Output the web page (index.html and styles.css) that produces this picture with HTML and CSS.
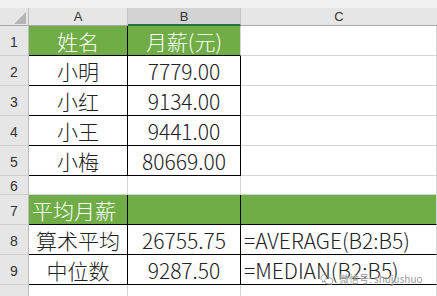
FILE: index.html
```html
<!DOCTYPE html>
<html lang="zh">
<head>
<meta charset="utf-8">
<link rel="stylesheet" href="styles.css">
</head>
<body>
<div class="sheet">
  <div class="strip"></div>

  <div class="corner"><span class="tri"></span></div>
  <div class="colhead">A</div>
  <div class="colhead sel">B</div>
  <div class="colhead last">C</div>

  <div class="rowhead">1</div>
  <div class="cell green bk-r bk-b center">姓名</div>
  <div class="cell green bk-b center">月薪(元)</div>
  <div class="cell"></div>

  <div class="rowhead">2</div>
  <div class="cell bk-r bk-b center">小明</div>
  <div class="cell bk-r bk-b center">7779.00</div>
  <div class="cell"></div>

  <div class="rowhead">3</div>
  <div class="cell bk-r bk-b center">小红</div>
  <div class="cell bk-r bk-b center">9134.00</div>
  <div class="cell"></div>

  <div class="rowhead">4</div>
  <div class="cell bk-r bk-b center">小王</div>
  <div class="cell bk-r bk-b center">9441.00</div>
  <div class="cell"></div>

  <div class="rowhead">5</div>
  <div class="cell bk-r bk-b center">小梅</div>
  <div class="cell bk-r bk-b center">80669.00</div>
  <div class="cell"></div>

  <div class="rowhead short">6</div>
  <div class="cell"></div>
  <div class="cell"></div>
  <div class="cell"></div>

  <div class="rowhead">7</div>
  <div class="cell green bk-r bk-b">平均月薪</div>
  <div class="cell green bk-r bk-b"></div>
  <div class="cell green bk-b"></div>

  <div class="rowhead">8</div>
  <div class="cell bk-r bk-b center">算术平均</div>
  <div class="cell bk-r bk-b center">26755.75</div>
  <div class="cell bk-b">=AVERAGE(B2:B5)</div>

  <div class="rowhead">9</div>
  <div class="cell bk-r bk-b center">中位数</div>
  <div class="cell bk-r bk-b center">9287.50</div>
  <div class="cell bk-b">=MEDIAN(B2:B5)</div>

  <div class="rowhead">10</div>
  <div class="cell"></div>
  <div class="cell"></div>
  <div class="cell"></div>

  <div class="watermark">
    <svg class="wm-icon" width="14" height="12" viewBox="0 0 15 12" fill="none" stroke="#9a9a9a" stroke-width="1">
      <path d="M6 1C3.2 1 1 2.8 1 5c0 1.2.7 2.3 1.8 3l-.4 1.5 1.7-.9c.6.2 1.2.3 1.9.3"/>
      <path d="M9.5 4.5c-2.6 0-4.6 1.6-4.6 3.5s2 3.5 4.6 3.5c.5 0 1-.1 1.5-.2l1.4.8-.3-1.3c1-.6 1.6-1.6 1.6-2.8 0-1.900-2-3.5-4.200-3.5z"/>
    </svg>
    <span class="wm-text">微信号: shujushuo</span>
  </div>
</div>
</body>
</html>
```

FILE: styles.css
```css
html, body {
  margin: 0;
  padding: 0;
  background: #ffffff;
}

.sheet {
  position: relative;
  width: 437px;
  height: 296px;
  overflow: hidden;
  display: grid;
  grid-template-columns: 29px 99px 113px 1fr;
  grid-template-rows: 8px 18px 30px 30px 30px 30px 30px 19px 30px 30px 30px 30px;
  font-family: "Noto Sans CJK SC", "Noto Sans", sans-serif;
  font-weight: 300;
  color: #222;
}

.strip {
  grid-column: 1 / -1;
  background: #f1f1f1;
}

.corner {
  position: relative;
  background: #e6e6e6;
  border-right: 1px solid #bcbcbc;
  border-bottom: 1px solid #a8a8a8;
  box-sizing: border-box;
}

.tri {
  position: absolute;
  right: 2px;
  bottom: 1px;
  width: 0;
  height: 0;
  border-left: 12px solid transparent;
  border-bottom: 12px solid #b5b5b5;
}

.colhead {
  background: #e6e6e6;
  border-right: 1px solid #c4c4c4;
  border-bottom: 1px solid #a8a8a8;
  box-sizing: border-box;
  font-family: "Liberation Sans", "Noto Sans", sans-serif;
  font-weight: 400;
  font-size: 13px;
  color: #333;
  display: flex;
  align-items: flex-end;
  justify-content: center;
  padding-bottom: 1px;
  line-height: 15px;
}

.colhead.sel {
  background: #d3d3d3;
  border-bottom: 2px solid #217346;
  padding-bottom: 0;
}

.colhead.last {
  border-right: none;
}

.rowhead {
  background: #e6e6e6;
  border-right: 1px solid #bcbcbc;
  border-bottom: 1px solid #cfcfcf;
  box-sizing: border-box;
  font-family: "Liberation Sans", "Noto Sans", sans-serif;
  font-weight: 400;
  font-size: 14px;
  color: #333;
  display: flex;
  align-items: center;
  justify-content: center;
  padding-top: 2px;
}

.cell {
  box-sizing: border-box;
  border-right: 1px solid #d4d4d4;
  border-bottom: 1px solid #d4d4d4;
  font-size: 21px;
  line-height: 28px;
  white-space: nowrap;
  display: flex;
  align-items: center;
  padding-left: 3px;
  overflow: visible;
}

.cell.center {
  justify-content: center;
  padding-left: 0;
}

.green {
  background: #70ad47;
  color: #ffffff;
}

.bk-r {
  border-right-color: #000;
}

.bk-b {
  border-bottom-color: #000;
}

.watermark {
  position: absolute;
  left: 320px;
  top: 272px;
  display: flex;
  align-items: center;
  gap: 5px;
  white-space: nowrap;
  font-family: "Noto Sans CJK SC", "Noto Sans", sans-serif;
  font-weight: 400;
  font-size: 10px;
  line-height: 13px;
  color: rgba(140, 140, 140, 0.9);
  text-shadow: 0 0 2px #fff;
}

.wm-icon {
  display: block;
  flex: none;
}

.wm-text {
  white-space: nowrap;
}
```
